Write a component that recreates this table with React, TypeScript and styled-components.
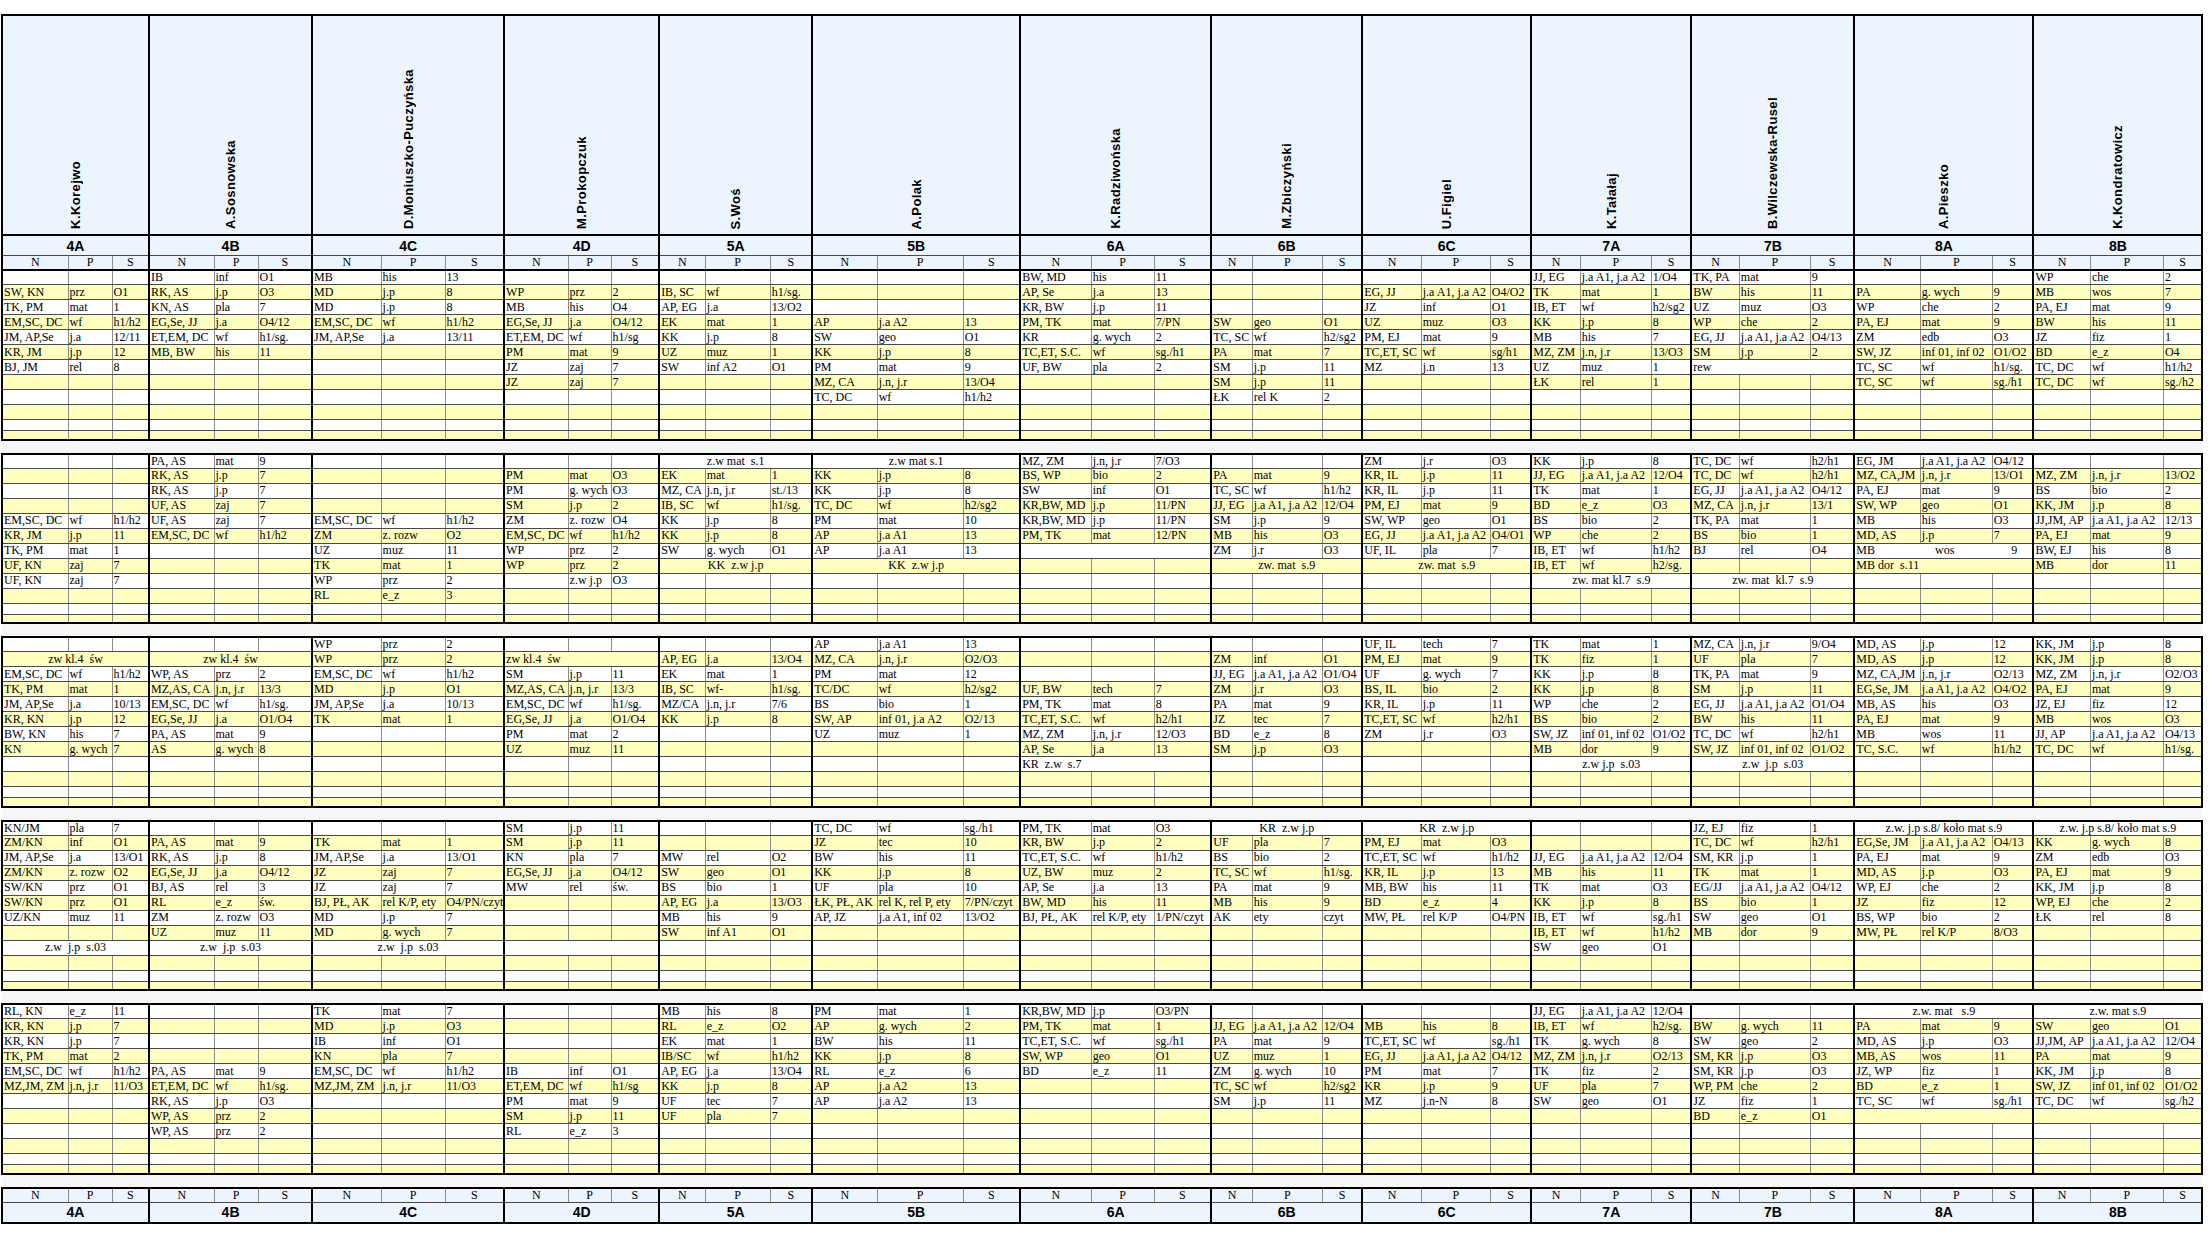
import React from 'react';
import styled, { createGlobalStyle } from 'styled-components';

const GlobalStyle = createGlobalStyle`
  html, body {
    margin: 0;
    padding: 0;
    background: #ffffff;
  }
`;

type ClassInfo = { id: string; teacher: string; w: [number, number, number] };

const CLASSES: ClassInfo[] = [
  { id: '4A', teacher: 'K.Korejwo', w: [66, 44, 37] },
  { id: '4B', teacher: 'A.Sosnowska', w: [65, 44, 54] },
  { id: '4C', teacher: 'D.Moniuszko-Puczyńska', w: [69, 64, 59] },
  { id: '4D', teacher: 'M.Prokopczuk', w: [64, 43, 48] },
  { id: '5A', teacher: 'S.Woś', w: [46, 65, 42] },
  { id: '5B', teacher: 'A.Polak', w: [65, 86, 57] },
  { id: '6A', teacher: 'K.Radziwońska', w: [71, 63, 57] },
  { id: '6B', teacher: 'M.Zbiczyński', w: [41, 70, 40] },
  { id: '6C', teacher: 'U.Figiel', w: [59, 69, 41] },
  { id: '7A', teacher: 'K.Tałałaj', w: [49, 71, 40] },
  { id: '7B', teacher: 'B.Wilczewska-Rusel', w: [48, 71, 44] },
  { id: '8A', teacher: 'A.Pieszko', w: [66, 72, 41] },
  { id: '8B', teacher: 'K.Kondratowicz', w: [57, 73, 39] },
];

// one string per class, rows split by ";" and cells by "|"
// "=text" is a row merged over N P S and centred, "<text" the same aligned left
const BLOCKS: string[][] = [
  [
    ';SW, KN|prz|O1;TK, PM|mat|1;EM,SC, DC|wf|h1/h2;JM, AP,Se|j.a|12/11;KR, JM|j.p|12;BJ, JM|rel|8',
    'IB|inf|O1;RK, AS|j.p|O3;KN, AS|pla|7;EG,Se, JJ|j.a|O4/12;ET,EM, DC|wf|h1/sg.;MB, BW|his|11',
    'MB|his|13;MD|j.p|8;MD|j.p|8;EM,SC, DC|wf|h1/h2;JM, AP,Se|j.a|13/11',
    ';WP|prz|2;MB|his|O4;EG,Se, JJ|j.a|O4/12;ET,EM, DC|wf|h1/sg;PM|mat|9;JZ|zaj|7;JZ|zaj|7',
    ';IB, SC|wf|h1/sg.;AP, EG|j.a|13/O2;EK|mat|1;KK|j.p|8;UZ|muz|1;SW|inf A2|O1',
    ';;;AP|j.a A2|13;SW|geo|O1;KK|j.p|8;PM|mat|9;MZ, CA|j.n, j.r|13/O4;TC, DC|wf|h1/h2',
    'BW, MD|his|11;AP, Se|j.a|13;KR, BW|j.p|11;PM, TK|mat|7/PN;KR|g. wych|2;TC,ET, S.C.|wf|sg./h1;UF, BW|pla|2',
    ';;;SW|geo|O1;TC, SC|wf|h2/sg2;PA|mat|7;SM|j.p|11;SM|j.p|11;ŁK|rel K|2',
    ';EG, JJ|j.a A1, j.a A2|O4/O2;JZ|inf|O1;UZ|muz|O3;PM, EJ|mat|9;TC,ET, SC|wf|sg/h1;MZ|j.n|13',
    'JJ, EG|j.a A1, j.a A2|1/O4;TK|mat|1;IB, ET|wf|h2/sg2;KK|j.p|8;MB|his|7;MZ, ZM|j.n, j.r|13/O3;UZ|muz|1;ŁK|rel|1',
    'TK, PA|mat|9;BW|his|11;UZ|muz|O3;WP|che|2;EG, JJ|j.a A1, j.a A2|O4/13;SM|j.p|2;<rew',
    ';PA|g. wych|9;WP|che|2;PA, EJ|mat|9;ZM|edb|O3;SW, JZ|inf 01, inf 02|O1/O2;TC, SC|wf|h1/sg.;TC, SC|wf|sg./h1',
    'WP|che|2;MB|wos|7;PA, EJ|mat|9;BW|his|11;JZ|fiz|1;BD|e_z|O4;TC, DC|wf|h1/h2;TC, DC|wf|sg./h2',
  ],
  [
    ';;;;EM,SC, DC|wf|h1/h2;KR, JM|j.p|11;TK, PM|mat|1;UF, KN|zaj|7;UF, KN|zaj|7',
    'PA, AS|mat|9;RK, AS|j.p|7;RK, AS|j.p|7;UF, AS|zaj|7;UF, AS|zaj|7;EM,SC, DC|wf|h1/h2',
    ';;;;EM,SC, DC|wf|h1/h2;ZM|z. rozw|O2;UZ|muz|11;TK|mat|1;WP|prz|2;RL|e_z|3',
    ';PM|mat|O3;PM|g. wych|O3;SM|j.p|2;ZM|z. rozw|O4;EM,SC, DC|wf|h1/h2;WP|prz|2;WP|prz|2;|z.w j.p|O3',
    '=z.w mat  s.1;EK|mat|1;MZ, CA|j.n, j.r|st./13;IB, SC|wf|h1/sg.;KK|j.p|8;KK|j.p|8;SW|g. wych|O1;=KK  z.w j.p',
    '=z.w mat s.1;KK|j.p|8;KK|j.p|8;TC, DC|wf|h2/sg2;PM|mat|10;AP|j.a A1|13;AP|j.a A1|13;=KK  z.w j.p',
    'MZ, ZM|j.n, j.r|7/O3;BS, WP|bio|2;SW|inf|O1;KR,BW, MD|j.p|11/PN;KR,BW, MD|j.p|11/PN;PM, TK|mat|12/PN;<',
    ';PA|mat|9;TC, SC|wf|h1/h2;JJ, EG|j.a A1, j.a A2|12/O4;SM|j.p|9;MB|his|O3;ZM|j.r|O3;=zw. mat  s.9',
    'ZM|j.r|O3;KR, IL|j.p|11;KR, IL|j.p|11;PM, EJ|mat|9;SW, WP|geo|O1;EG, JJ|j.a A1, j.a A2|O4/O1;UF, IL|pla|7;=zw. mat  s.9',
    'KK|j.p|8;JJ, EG|j.a A1, j.a A2|12/O4;TK|mat|1;BD|e_z|O3;BS|bio|2;WP|che|2;IB, ET|wf|h1/h2;IB, ET|wf|h2/sg.;=zw. mat kl.7  s.9',
    'TC, DC|wf|h2/h1;TC, DC|wf|h2/h1;EG, JJ|j.a A1, j.a A2|O4/12;MZ, CA|j.n, j.r|13/1;TK, PA|mat|1;BS|bio|1;BJ|rel|O4;;=zw. mat  kl.7  s.9',
    'EG, JM|j.a A1, j.a A2|O4/12;MZ, CA,JM|j.n, j.r|13/O1;PA, EJ|mat|9;SW, WP|geo|O1;MB|his|O3;MD, AS|j.p|7;<MB                    wos                   9;<MB dor  s.11',
    ';MZ, ZM|j.n, j.r|13/O2;BS|bio|2;KK, JM|j.p|8;JJ,JM, AP|j.a A1, j.a A2|12/13;PA, EJ|mat|9;BW, EJ|his|8;MB|dor|11',
  ],
  [
    ';=zw kl.4  św;EM,SC, DC|wf|h1/h2;TK, PM|mat|1;JM, AP,Se|j.a|10/13;KR, KN|j.p|12;BW, KN|his|7;KN|g. wych|7',
    ';=zw kl.4  św;WP, AS|prz|2;MZ,AS, CA|j.n, j.r|13/3;EM,SC, DC|wf|h1/sg.;EG,Se, JJ|j.a|O1/O4;PA, AS|mat|9;AS|g. wych|8',
    'WP|prz|2;WP|prz|2;EM,SC, DC|wf|h1/h2;MD|j.p|O1;JM, AP,Se|j.a|10/13;TK|mat|1',
    ';<zw kl.4  św;SM|j.p|11;MZ,AS, CA|j.n, j.r|13/3;EM,SC, DC|wf|h1/sg.;EG,Se, JJ|j.a|O1/O4;PM|mat|2;UZ|muz|11',
    ';AP, EG|j.a|13/O4;EK|mat|1;IB, SC|wf-|h1/sg.;MZ/CA|j.n, j.r|7/6;KK|j.p|8',
    'AP|j.a A1|13;MZ, CA|j.n, j.r|O2/O3;PM|mat|12;TC/DC|wf|h2/sg2;BS|bio|1;SW, AP|inf 01, j.a A2|O2/13;UZ|muz|1',
    ';;;UF, BW|tech|7;PM, TK|mat|8;TC,ET, S.C.|wf|h2/h1;MZ, ZM|j.n, j.r|12/O3;AP, Se|j.a|13;<KR  z.w  s.7',
    ';ZM|inf|O1;JJ, EG|j.a A1, j.a A2|O1/O4;ZM|j.r|O3;PA|mat|9;JZ|tec|7;BD|e_z|8;SM|j.p|O3',
    'UF, IL|tech|7;PM, EJ|mat|9;UF|g. wych|7;BS, IL|bio|2;KR, IL|j.p|11;TC,ET, SC|wf|h2/h1;ZM|j.r|O3',
    'TK|mat|1;TK|fiz|1;KK|j.p|8;KK|j.p|8;WP|che|2;BS|bio|2;SW, JZ|inf 01, inf 02|O1/O2;MB|dor|9;=z.w j.p  s.03',
    'MZ, CA|j.n, j.r|9/O4;UF|pla|7;TK, PA|mat|9;SM|j.p|11;EG, JJ|j.a A1, j.a A2|O1/O4;BW|his|11;TC, DC|wf|h2/h1;SW, JZ|inf 01, inf 02|O1/O2;=z.w  j.p  s.03',
    'MD, AS|j.p|12;MD, AS|j.p|12;MZ, CA,JM|j.n, j.r|O2/13;EG,Se, JM|j.a A1, j.a A2|O4/O2;MB, AS|his|O3;PA, EJ|mat|9;MB|wos|11;TC, S.C.|wf|h1/h2',
    'KK, JM|j.p|8;KK, JM|j.p|8;MZ, ZM|j.n, j.r|O2/O3;PA, EJ|mat|9;JZ, EJ|fiz|12;MB|wos|O3;JJ, AP|j.a A1, j.a A2|O4/13;TC, DC|wf|h1/sg.',
  ],
  [
    'KN/JM|pla|7;ZM/KN|inf|O1;JM, AP,Se|j.a|13/O1;ZM/KN|z. rozw|O2;SW/KN|prz|O1;SW/KN|prz|O1;UZ/KN|muz|11;;=z.w  j.p  s.03',
    ';PA, AS|mat|9;RK, AS|j.p|8;EG,Se, JJ|j.a|O4/12;BJ, AS|rel|3;RL|e_z|św.;ZM|z. rozw|O3;UZ|muz|11;=z.w  j.p  s.03',
    ';TK|mat|1;JM, AP,Se|j.a|13/O1;JZ|zaj|7;JZ|zaj|7;BJ, PŁ, AK|rel K/P, ety|O4/PN/czyt;MD|j.p|7;MD|g. wych|7;=z.w  j.p  s.03',
    'SM|j.p|11;SM|j.p|11;KN|pla|7;EG,Se, JJ|j.a|O4/12;MW|rel|św.;;;;<',
    ';;MW|rel|O2;SW|geo|O1;BS|bio|1;AP, EG|j.a|13/O3;MB|his|9;SW|inf A1|O1',
    'TC, DC|wf|sg./h1;JZ|tec|10;BW|his|11;KK|j.p|8;UF|pla|10;ŁK, PŁ, AK|rel K, rel P, ety|7/PN/czyt;AP, JZ|j.a A1, inf 02|13/O2',
    'PM, TK|mat|O3;KR, BW|j.p|2;TC,ET, S.C.|wf|h1/h2;UZ, BW|muz|2;AP, Se|j.a|13;BW, MD|his|11;BJ, PŁ, AK|rel K/P, ety|1/PN/czyt',
    '=KR  z.w j.p;UF|pla|7;BS|bio|2;TC, SC|wf|h1/sg.;PA|mat|9;MB|his|9;AK|ety|czyt',
    '=KR  z.w j.p;PM, EJ|mat|O3;TC,ET, SC|wf|h1/h2;KR, IL|j.p|13;MB, BW|his|11;BD|e_z|4;MW, PŁ|rel K/P|O4/PN',
    ';;JJ, EG|j.a A1, j.a A2|12/O4;MB|his|11;TK|mat|O3;KK|j.p|8;IB, ET|wf|sg./h1;IB, ET|wf|h1/h2;SW|geo|O1',
    'JZ, EJ|fiz|1;TC, DC|wf|h2/h1;SM, KR|j.p|1;TK|mat|1;EG/JJ|j.a A1, j.a A2|O4/12;BS|bio|1;SW|geo|O1;MB|dor|9',
    '=z.w. j.p s.8/ koło mat s.9;EG,Se, JM|j.a A1, j.a A2|O4/13;PA, EJ|mat|9;MD, AS|j.p|O3;WP, EJ|che|2;JZ|fiz|12;BS, WP|bio|2;MW, PŁ|rel K/P|8/O3',
    '=z.w. j.p s.8/ koło mat s.9;KK|g. wych|8;ZM|edb|O3;PA, EJ|mat|9;KK, JM|j.p|8;WP, EJ|che|2;ŁK|rel|8',
  ],
  [
    'RL, KN|e_z|11;KR, KN|j.p|7;KR, KN|j.p|7;TK, PM|mat|2;EM,SC, DC|wf|h1/h2;MZ,JM, ZM|j.n, j.r|11/O3',
    ';;;;PA, AS|mat|9;ET,EM, DC|wf|h1/sg.;RK, AS|j.p|O3;WP, AS|prz|2;WP, AS|prz|2',
    'TK|mat|7;MD|j.p|O3;IB|inf|O1;KN|pla|7;EM,SC, DC|wf|h1/h2;MZ,JM, ZM|j.n, j.r|11/O3',
    ';;;;IB|inf|O1;ET,EM, DC|wf|h1/sg;PM|mat|9;SM|j.p|11;RL|e_z|3',
    'MB|his|8;RL|e_z|O2;EK|mat|1;IB/SC|wf|h1/h2;AP, EG|j.a|13/O4;KK|j.p|8;UF|tec|7;UF|pla|7',
    'PM|mat|1;AP|g. wych|2;BW|his|11;KK|j.p|8;RL|e_z|6;AP|j.a A2|13;AP|j.a A2|13',
    'KR,BW, MD|j.p|O3/PN;PM, TK|mat|1;TC,ET, S.C.|wf|sg./h1;SW, WP|geo|O1;BD|e_z|11',
    ';JJ, EG|j.a A1, j.a A2|12/O4;PA|mat|9;UZ|muz|1;ZM|g. wych|10;TC, SC|wf|h2/sg2;SM|j.p|11',
    ';MB|his|8;TC,ET, SC|wf|sg./h1;EG, JJ|j.a A1, j.a A2|O4/12;PM|mat|7;KR|j.p|9;MZ|j.n-N|8',
    'JJ, EG|j.a A1, j.a A2|12/O4;IB, ET|wf|h2/sg.;TK|g. wych|8;MZ, ZM|j.n, j.r|O2/13;TK|fiz|2;UF|pla|7;SW|geo|O1',
    ';BW|g. wych|11;SW|geo|2;SM, KR|j.p|O3;SM, KR|j.p|O3;WP, PM|che|2;JZ|fiz|1;BD|e_z|O1',
    '=z.w. mat   s.9;PA|mat|9;MD, AS|j.p|O3;MB, AS|wos|11;JZ, WP|fiz|1;BD|e_z|1;TC, SC|wf|sg./h1;<',
    '=z.w. mat s.9;SW|geo|O1;JJ,JM, AP|j.a A1, j.a A2|12/O4;PA|mat|9;KK, JM|j.p|8;SW, JZ|inf 01, inf 02|O1/O2;TC, DC|wf|sg./h2;<',
  ],
];

const ROW_H = [14, 15, 15, 15, 15, 15, 15, 15, 15, 15, 11, 9];
const COLS = CLASSES.length * 3;

type Lesson =
  | { kind: 'cells'; cells: [string, string, string] }
  | { kind: 'span'; text: string; align: 'center' | 'left' };

const parseClass = (src: string): Lesson[] => {
  const rows = src.split(';');
  return ROW_H.map((_, i) => {
    const raw = rows[i] ?? '';
    if (raw.startsWith('=')) return { kind: 'span', text: raw.slice(1), align: 'center' };
    if (raw.startsWith('<')) return { kind: 'span', text: raw.slice(1), align: 'left' };
    const [n = '', p = '', s = ''] = raw.split('|');
    return { kind: 'cells', cells: [n, p, s] };
  });
};

const THICK = '2px solid #000';
const THIN_V = '1px solid #8c8c8c';
const THIN_H = '1px solid #4a4a4a';

const Page = styled.div`
  padding: 14px 0 0 1px;
  background: #ffffff;
`;

const Grid = styled.table`
  border-collapse: collapse;
  table-layout: fixed;
  width: 2199px;
  font-family: 'Liberation Serif', 'Times New Roman', serif;
  font-size: 12px;
  color: #000;
`;

const Row = styled.tr<{ $h: number }>`
  height: ${(p) => p.$h}px;
`;

const NameCell = styled.th`
  height: 217px;
  padding: 0 0 1px;
  background: #ecf4fd;
  border: ${THICK};
  vertical-align: bottom;
  text-align: center;
`;

const VerticalName = styled.div`
  display: inline-block;
  writing-mode: vertical-rl;
  transform: rotate(180deg);
  font-family: 'Liberation Sans', Arial, sans-serif;
  font-weight: 700;
  font-size: 13px;
  letter-spacing: 0.4px;
  line-height: 15px;
  white-space: nowrap;
`;

const ClassCell = styled.th<{ $foot?: boolean }>`
  height: 19px;
  padding: 0;
  background: #ecf4fd;
  border-left: ${THICK};
  border-right: ${THICK};
  border-top: ${(p) => (p.$foot ? THIN_H : THICK)};
  border-bottom: ${(p) => (p.$foot ? THICK : THIN_H)};
  font-family: 'Liberation Sans', Arial, sans-serif;
  font-weight: 700;
  font-size: 14px;
  text-align: center;
  vertical-align: middle;
`;

const SubHead = styled.th<{ $col: number; $foot?: boolean }>`
  height: 13px;
  padding: 0;
  background: #ecf4fd;
  font-weight: 400;
  font-size: 12px;
  line-height: 13px;
  text-align: center;
  border-left: ${(p) => (p.$col === 0 ? THICK : THIN_V)};
  border-right: ${(p) => (p.$col === 2 ? THICK : THIN_V)};
  border-top: ${(p) => (p.$foot ? THICK : THIN_H)};
  border-bottom: ${(p) => (p.$foot ? THIN_H : THICK)};
`;

const Cell = styled.td<{ $col: number; $tone: 'white' | 'yellow'; $top: boolean; $end: boolean }>`
  padding: 0 1px;
  line-height: 13px;
  white-space: pre;
  overflow: hidden;
  vertical-align: middle;
  background: ${(p) => (p.$tone === 'yellow' ? '#ffffc0' : '#ffffff')};
  border-left: ${(p) => (p.$col === 0 ? THICK : THIN_V)};
  border-right: ${(p) => (p.$col === 2 ? THICK : THIN_V)};
  border-top: ${(p) => (p.$top ? THICK : THIN_H)};
  border-bottom: ${(p) => (p.$end ? THICK : THIN_H)};
`;

const SpanCell = styled.td<{ $align: 'center' | 'left'; $tone: 'white' | 'yellow'; $top: boolean; $end: boolean }>`
  padding: 0 1px;
  line-height: 13px;
  white-space: pre;
  overflow: hidden;
  vertical-align: middle;
  text-align: ${(p) => p.$align};
  background: ${(p) => (p.$tone === 'yellow' ? '#ffffc0' : '#ffffff')};
  border-left: ${THICK};
  border-right: ${THICK};
  border-top: ${(p) => (p.$top ? THICK : THIN_H)};
  border-bottom: ${(p) => (p.$end ? THICK : THIN_H)};
`;

const GapCell = styled.td`
  height: 12px;
  padding: 0;
  background: #f6f6f6;
  border-left: none;
  border-right: none;
`;

const SubHeadRow: React.FC<{ foot?: boolean }> = ({ foot }) => (
  <tr>
    {CLASSES.map((c) =>
      ['N', 'P', 'S'].map((l, i) => (
        <SubHead key={c.id + l} $col={i} $foot={foot}>
          {l}
        </SubHead>
      )),
    )}
  </tr>
);

const ClassRow: React.FC<{ foot?: boolean }> = ({ foot }) => (
  <tr>
    {CLASSES.map((c) => (
      <ClassCell key={c.id} colSpan={3} $foot={foot}>
        {c.id}
      </ClassCell>
    ))}
  </tr>
);

const Gap: React.FC = () => (
  <tr>
    <GapCell colSpan={COLS} />
  </tr>
);

const Block: React.FC<{ data: string[] }> = ({ data }) => {
  const parsed = data.map(parseClass);
  return (
    <>
      {ROW_H.map((h, r) => {
        const tone = r % 2 === 1 ? 'yellow' : 'white';
        const top = r === 0;
        const end = r === ROW_H.length - 1;
        return (
          <Row key={r} $h={h}>
            {CLASSES.map((c, ci) => {
              const lesson = parsed[ci][r];
              if (lesson.kind === 'span') {
                return (
                  <SpanCell key={c.id} colSpan={3} $align={lesson.align} $tone={tone} $top={top} $end={end}>
                    {lesson.text}
                  </SpanCell>
                );
              }
              return lesson.cells.map((t, i) => (
                <Cell key={c.id + i} $col={i} $tone={tone} $top={top} $end={end}>
                  {t}
                </Cell>
              ));
            })}
          </Row>
        );
      })}
    </>
  );
};

const App: React.FC = () => {
  return (
    <Page>
      <GlobalStyle />
      <Grid>
        <colgroup>
          {CLASSES.map((c) => c.w.map((w, i) => <col key={c.id + i} style={{ width: w }} />))}
        </colgroup>
        <tbody>
          <tr>
            {CLASSES.map((c) => (
              <NameCell key={c.id} colSpan={3}>
                <VerticalName>{c.teacher}</VerticalName>
              </NameCell>
            ))}
          </tr>
          <ClassRow />
          <SubHeadRow />
          {BLOCKS.map((b, i) => (
            <React.Fragment key={i}>
              {i > 0 && <Gap />}
              <Block data={b} />
            </React.Fragment>
          ))}
          <Gap />
          <SubHeadRow foot />
          <ClassRow foot />
        </tbody>
      </Grid>
    </Page>
  );
};

export default App;
